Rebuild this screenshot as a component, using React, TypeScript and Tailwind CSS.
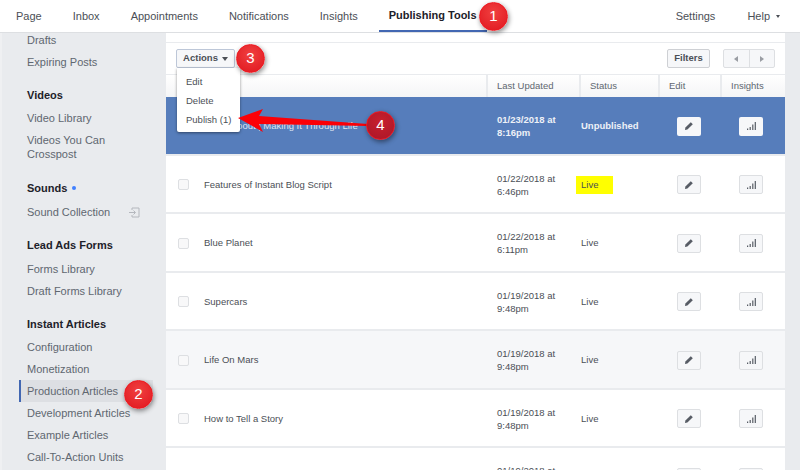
import type { ReactNode } from 'react'

const tabs = ['Page', 'Inbox', 'Appointments', 'Notifications', 'Insights']

const rows = [
  { title: 'Features of Instant Blog Script', date: '01/22/2018 at', time: '6:46pm', status: 'Live', mark: true },
  { title: 'Blue Planet', date: '01/22/2018 at', time: '6:11pm', status: 'Live' },
  { title: 'Supercars', date: '01/19/2018 at', time: '9:48pm', status: 'Live' },
  { title: 'Life On Mars', date: '01/19/2018 at', time: '9:48pm', status: 'Live', shaded: true },
  { title: 'How to Tell a Story', date: '01/19/2018 at', time: '9:48pm', status: 'Live' },
  { title: '', date: '01/19/2018 at', time: '', status: '' },
]

function SideHead({ children, className = '' }: { children: ReactNode; className?: string }) {
  return <div className={`h-[22px] flex items-center pl-[27px] text-[11px] font-bold text-[#1d2129] ${className}`}>{children}</div>
}

function SideItem({ children, active }: { children: ReactNode; active?: boolean }) {
  return (
    <div className={`h-[22px] ml-[19px] w-[134px] flex items-center pl-[6px] text-[11px] text-[#606770] border-l-2 ${active ? 'border-[#4267b2] bg-[#dddfe3]' : 'border-transparent'}`}>
      {children}
    </div>
  )
}

function Pencil() {
  return (
    <svg width="10" height="10" viewBox="0 0 10 10" fill="#575c65">
      <path d="M6.8 1.2 8.8 3.2 3.4 8.6 1 9 1.4 6.6Z" />
    </svg>
  )
}

function Bars() {
  return (
    <svg width="9" height="8" viewBox="0 0 9 8" fill="#575c65">
      <rect x="0" y="6.5" width="1.2" height="1.5" />
      <rect x="2.6" y="5" width="1.2" height="3" />
      <rect x="5.2" y="2.5" width="1.2" height="5.5" />
      <rect x="7.7" y="0" width="1.2" height="8" />
    </svg>
  )
}

function IconButton({ children, flat }: { children: ReactNode; flat?: boolean }) {
  return (
    <div className={`w-[24px] h-[19px] rounded-[2px] flex items-center justify-center ${flat ? 'bg-[#f6f7f9]' : 'bg-[#f6f7f9] border border-[#dddfe2]'}`}>
      {children}
    </div>
  )
}

function Badge({ n, className }: { n: number; className: string }) {
  return (
    <div className={`absolute w-[29px] h-[29px] rounded-full flex items-center justify-center text-white text-[15px] shadow-[1px_2px_5px_rgba(0,0,0,0.45)] border-[1.5px] border-[#ee1820] ${className}`}>
      {n}
    </div>
  )
}

const gridCols = 'grid grid-cols-[322px_93px_79px_62px_63px]'

export default function App() {
  return (
    <div className="relative w-[800px] h-[470px] overflow-hidden bg-[#e9ebee] font-['Liberation_Sans',Arial,sans-serif]">
      {/* Top nav */}
      <div className="h-[33px] bg-white border-b border-[#dddfe2] flex pl-[6px] pr-[20px] text-[11px] text-[#4b4f56]">
        <div className="flex gap-[11px]">
          {tabs.map((t) => (
            <div key={t} className="px-[10px] flex items-center">{t}</div>
          ))}
          <div className="px-[10px] flex items-center font-bold text-[#1d2129] border-b-2 border-[#4267b2] h-[32px]">Publishing Tools</div>
        </div>
        <div className="ml-auto flex items-center gap-[32px]">
          <span>Settings</span>
          <span className="flex items-center gap-[6px]">
            Help
            <span className="w-0 h-0 border-x-[2.5px] border-x-transparent border-t-[3px] border-t-[#4b4f56]" />
          </span>
        </div>
      </div>

      <div className="flex h-[437px]">
        {/* Sidebar */}
        <div className="w-[166px] shrink-0 border-l-2 border-[#eff0f2] overflow-hidden">
          <div className="-ml-[2px] -mt-[4px]">
            <SideItem>Drafts</SideItem>
            <SideItem>Expiring Posts</SideItem>
            <SideHead className="mt-[11px] mb-[1px]">Videos</SideHead>
            <SideItem>Video Library</SideItem>
            <div className="ml-[27px] mt-[4px] text-[11px] leading-[14px] text-[#606770]">
              Videos You Can<br />Crosspost
            </div>
            <SideHead className="mt-[16px] mb-[2px]">
              Sounds
              <span className="ml-[5px] w-[4px] h-[4px] rounded-full bg-[#4080ff]" />
            </SideHead>
            <div className="relative">
              <SideItem>Sound Collection</SideItem>
              <svg className="absolute left-[129px] top-[6px]" width="11" height="11" viewBox="0 0 11 11" fill="none" stroke="#b4b7bd" strokeWidth="1">
                <path d="M3 3V1h7v9H3V8M0 5.5h6M4.5 3.5l2 2-2 2" />
              </svg>
            </div>
            <SideHead className="mt-[11px] mb-[2px]">Lead Ads Forms</SideHead>
            <SideItem>Forms Library</SideItem>
            <SideItem>Draft Forms Library</SideItem>
            <SideHead className="mt-[11px] mb-[1px]">Instant Articles</SideHead>
            <SideItem>Configuration</SideItem>
            <SideItem>Monetization</SideItem>
            <SideItem active>Production Articles</SideItem>
            <SideItem>Development Articles</SideItem>
            <SideItem>Example Articles</SideItem>
            <SideItem>Call-To-Action Units</SideItem>
          </div>
        </div>

        {/* Main column */}
        <div className="w-[619px] bg-white text-[9.5px] text-[#4b4f56] overflow-hidden">
          <div className="h-[9px] border-b border-[#e9ebee] box-content" />
          <div className="h-[32px] border-b border-[#e9ebee] flex items-center pl-[10px] pr-[10px]">
            <div className="w-[59px] h-[19px] rounded-[2px] bg-[#f6f7f9] border border-[#bdc7d8] flex items-center justify-center gap-[4px] font-bold text-[#4b4f56]">
              Actions
              <span className="w-0 h-0 border-x-[3.5px] border-x-transparent border-t-[4px] border-t-[#4b4f56]" />
            </div>
            <div className="ml-auto w-[43px] h-[19px] rounded-[2px] bg-[#f6f7f9] border border-[#ced0d4] flex items-center justify-center font-bold">Filters</div>
            <div className="ml-[13px] w-[52px] h-[19px] rounded-[2px] bg-[#f6f7f9] border border-[#dddfe2] flex">
              <div className="flex-1 border-r border-[#dddfe2] flex items-center justify-center">
                <span className="w-0 h-0 border-y-[3.5px] border-y-transparent border-r-[4px] border-r-[#9a9da3]" />
              </div>
              <div className="flex-1 flex items-center justify-center">
                <span className="w-0 h-0 border-y-[3.5px] border-y-transparent border-l-[4px] border-l-[#9a9da3]" />
              </div>
            </div>
          </div>

          {/* Table header */}
          <div className={`${gridCols} h-[22px] bg-gradient-to-b from-white to-[#f4f5f6] text-[#606770]`}>
            <div className="border-r-2 border-[#e9ebee]" />
            <div className="pl-[9px] flex items-center border-r-2 border-[#e9ebee]">Last Updated</div>
            <div className="pl-[9px] flex items-center border-r-2 border-[#e9ebee]">Status</div>
            <div className="pl-[9px] flex items-center border-r-2 border-[#e9ebee]">Edit</div>
            <div className="pl-[9px] flex items-center">Insights</div>
          </div>

          {/* Selected row */}
          <div className={`${gridCols} h-[58.5px] pt-[2px] bg-[#567dbb] border-b-2 border-[#e9ebee] text-[#eef1f7] items-center`}>
            <div className="pl-[41px] whitespace-nowrap text-[#dfe5f1]">Book About | Making It Through Life</div>
            <div className="pl-[9px] leading-[13px] font-bold">01/23/2018 at<br />8:16pm</div>
            <div className="font-bold">Unpublished</div>
            <div className="pl-[17px]"><IconButton flat><Pencil /></IconButton></div>
            <div className="pl-[17px]"><IconButton flat><Bars /></IconButton></div>
          </div>

          {rows.map((r, i) => (
            <div key={i} className={`${gridCols} h-[58.5px] pt-[2px] border-b-2 border-[#e9ebee] items-center ${r.shaded ? 'bg-[#f6f7f9]' : 'bg-white'}`}>
              <div className="pl-[12px] flex items-center">
                <span className="w-[11px] h-[11px] rounded-[2px] bg-[#f8f8f9] border border-[#dddfe2] mr-[15px]" />
                {r.title}
              </div>
              <div className="pl-[9px] leading-[13px]">{r.date}<br />{r.time || '\u00a0'}</div>
              <div>
                <span className={`inline-flex items-center h-[18px] w-[37px] -ml-[5px] pl-[5px] ${r.mark ? 'bg-[#ffff00]' : ''}`}>{r.status}</span>
              </div>
              <div className="pl-[17px]"><IconButton><Pencil /></IconButton></div>
              <div className="pl-[17px]"><IconButton><Bars /></IconButton></div>
            </div>
          ))}
        </div>
      </div>

      {/* Actions menu */}
      <div className="absolute left-[177px] top-[68px] w-[63px] h-[64px] bg-white rounded-b-[2px] shadow-[0_1px_3px_rgba(0,0,0,0.45)] text-[9.5px] text-[#4b4f56] flex flex-col pt-[5px]">
        <div className="h-[19px] flex items-center pl-[9px]">Edit</div>
        <div className="h-[19px] flex items-center pl-[9px]">Delete</div>
        <div className="h-[19px] flex items-center pl-[9px]">Publish (1)</div>
      </div>

      {/* Annotations */}
      <svg className="absolute left-[235px] top-[105px]" width="150" height="32" viewBox="0 0 150 32">
        <path d="M3 13 28 4 24 11 133 19 133 21 24 19 28 27Z" fill="#fb0007" />
      </svg>
      <Badge n={1} className="left-[479px] top-[2px] bg-[radial-gradient(circle_at_50%_35%,#f04040,#e0161e)]" />
      <Badge n={2} className="left-[124px] top-[380px] bg-[radial-gradient(circle_at_50%_35%,#f04040,#e0161e)]" />
      <Badge n={3} className="left-[236px] top-[44px] bg-[radial-gradient(circle_at_50%_35%,#f04040,#e0161e)]" />
      <Badge n={4} className="left-[366px] top-[111px] bg-[radial-gradient(circle_at_50%_35%,#c8202c,#a9162a)]" />
    </div>
  )
}
